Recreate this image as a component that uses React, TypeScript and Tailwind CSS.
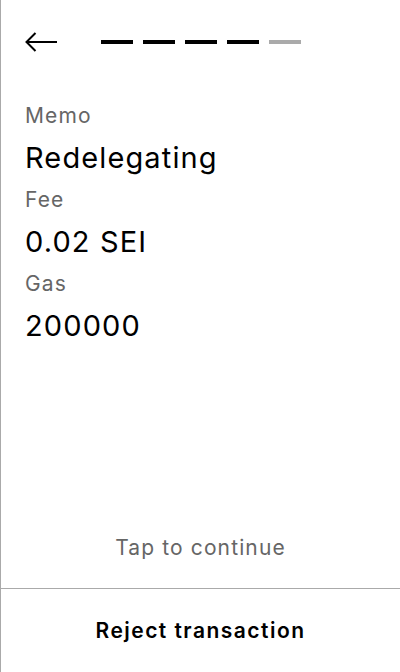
import React from "react";

const steps = [true, true, true, true, false];

const rows = [
  { label: "Memo", value: "Redelegating" },
  { label: "Fee", value: "0.02 SEI" },
  { label: "Gas", value: "200000" },
];

export default function App() {
  return (
    <div
      className="flex h-[672px] w-[400px] flex-col border-l border-[#aaaaaa] bg-white text-black tracking-[0.07em]"
      style={{ fontFamily: "Inter, 'Noto Sans', sans-serif" }}
    >
      {/* Header */}
      <div className="flex h-[84px] items-center px-6">
        <button className="flex h-5 w-8 items-center">
          <svg width="32" height="20" viewBox="0 0 32 20" fill="none">
            <path d="M1.5 10H32M10.5 1L1.5 10L10.5 19" stroke="#000" strokeWidth="2" />
          </svg>
        </button>
        <div className="ml-11 flex gap-[10px]">
          {steps.map((done, i) => (
            <div
              key={i}
              className={`h-1 w-8 ${done ? "bg-black" : "bg-[#aaaaaa]"}`}
            />
          ))}
        </div>
      </div>

      {/* Details */}
      <div className="flex flex-col px-6 pt-[18px]">
        {rows.map((r) => (
          <div key={r.label} className="mb-2.5 flex flex-col">
            <span className="text-[21px] leading-7 text-[#666666]">{r.label}</span>
            <span className="mt-2.5 text-[29px] leading-9">{r.value}</span>
          </div>
        ))}
      </div>

      <div className="flex-1" />

      <div className="pb-[26px] text-center text-[21px] leading-7 text-[#666666]">
        Tap to continue
      </div>

      <button className="h-[84px] border-t border-[#aaaaaa] text-[21px] font-semibold tracking-[0.07em]">
        Reject transaction
      </button>
    </div>
  );
}
